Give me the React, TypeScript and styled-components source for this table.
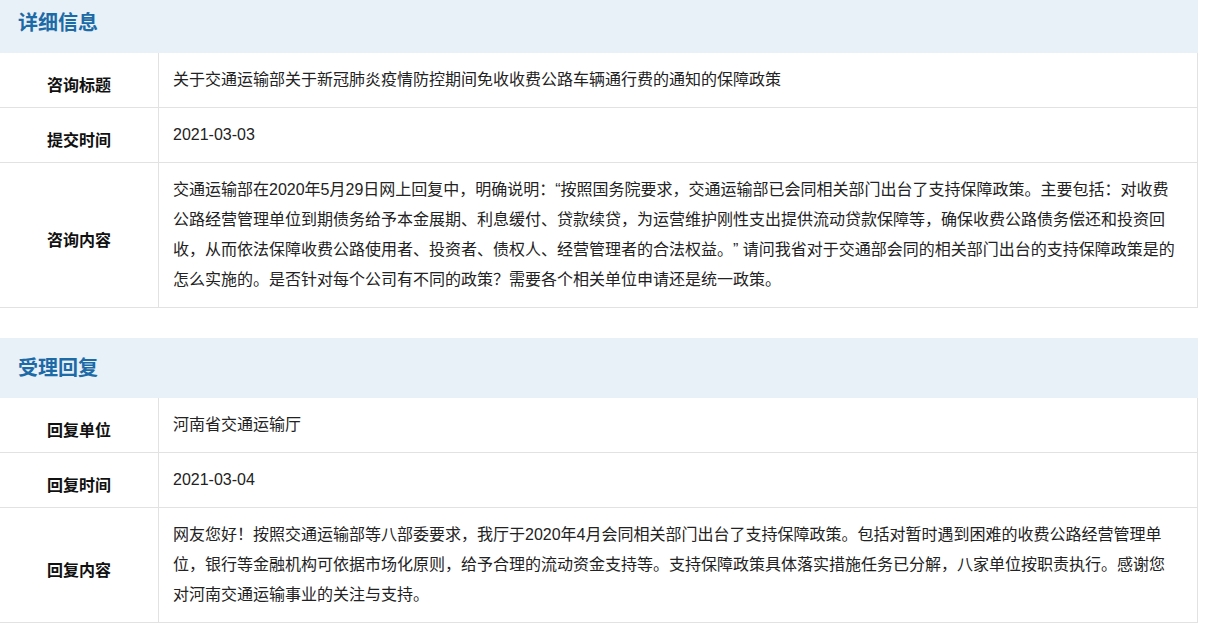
import React from "react";
import styled, { createGlobalStyle } from "styled-components";

const GlobalStyle = createGlobalStyle`
  html, body {
    margin: 0;
    padding: 0;
    background: #ffffff;
  }
  body {
    font-family: "Liberation Sans", "Noto Sans CJK SC", sans-serif;
  }
`;

const Page = styled.div`
  width: 1198px;
  margin-top: -7px;
  display: flex;
  flex-direction: column;
  gap: 30px;
`;

const Section = styled.section`
  display: flex;
  flex-direction: column;
`;

const SectionHeader = styled.h2`
  margin: 0;
  height: 60px;
  padding-left: 18px;
  background: #e8f0f8;
  color: #1c6aa6;
  font-size: 20px;
  font-weight: 700;
  line-height: 60px;
  font-family: "Liberation Sans", "Noto Sans CJK SC", sans-serif;
`;

const Table = styled.div`
  display: flex;
  flex-direction: column;
  border-right: 1px solid #e2e2e2;
`;

const Row = styled.div`
  display: grid;
  grid-template-columns: 159px 1fr;
  border-bottom: 1px solid #e2e2e2;
`;

const Label = styled.div`
  display: flex;
  align-items: center;
  justify-content: center;
  padding-top: 8px;
  border-right: 1px solid #e2e2e2;
  color: #111111;
  font-size: 16px;
  font-weight: 700;
  font-family: "Liberation Sans", "Noto Sans CJK SC", sans-serif;
`;

const Value = styled.div`
  padding: 12px 17px 12px 14px;
  color: #222222;
  font-size: 16px;
  line-height: 30px;
  text-spacing-trim: space-all;
  font-family: "Liberation Sans", "Noto Sans CJK SC", sans-serif;
`;

type Item = { label: string; value: string };

const detail: Item[] = [
  {
    label: "咨询标题",
    value:
      "关于交通运输部关于新冠肺炎疫情防控期间免收收费公路车辆通行费的通知的保障政策",
  },
  { label: "提交时间", value: "2021-03-03" },
  {
    label: "咨询内容",
    value:
      "交通运输部在2020年5月29日网上回复中，明确说明：“按照国务院要求，交通运输部已会同相关部门出台了支持保障政策。主要包括：对收费公路经营管理单位到期债务给予本金展期、利息缓付、贷款续贷，为运营维护刚性支出提供流动贷款保障等，确保收费公路债务偿还和投资回收，从而依法保障收费公路使用者、投资者、债权人、经营管理者的合法权益。” 请问我省对于交通部会同的相关部门出台的支持保障政策是的怎么实施的。是否针对每个公司有不同的政策？需要各个相关单位申请还是统一政策。",
  },
];

const reply: Item[] = [
  { label: "回复单位", value: "河南省交通运输厅" },
  { label: "回复时间", value: "2021-03-04" },
  {
    label: "回复内容",
    value:
      "网友您好！按照交通运输部等八部委要求，我厅于2020年4月会同相关部门出台了支持保障政策。包括对暂时遇到困难的收费公路经营管理单位，银行等金融机构可依据市场化原则，给予合理的流动资金支持等。支持保障政策具体落实措施任务已分解，八家单位按职责执行。感谢您对河南交通运输事业的关注与支持。",
  },
];

const InfoSection: React.FC<{ title: string; items: Item[] }> = ({ title, items }) => (
  <Section>
    <SectionHeader>{title}</SectionHeader>
    <Table>
      {items.map((it) => (
        <Row key={it.label}>
          <Label>{it.label}</Label>
          <Value>{it.value}</Value>
        </Row>
      ))}
    </Table>
  </Section>
);

export default function App() {
  return (
    <>
      <GlobalStyle />
      <Page>
        <InfoSection title="详细信息" items={detail} />
        <InfoSection title="受理回复" items={reply} />
      </Page>
    </>
  );
}
